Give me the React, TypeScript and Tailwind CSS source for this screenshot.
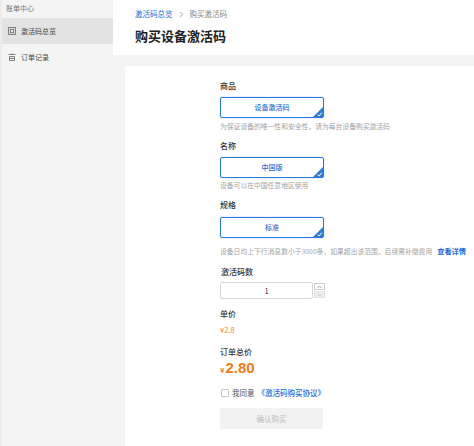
import { ChevronRight } from "lucide-react";

const font = { fontFamily: '"Noto Sans CJK SC", "Noto Sans", sans-serif' };

function OptionBox({ label }: { label: string }) {
  return (
    <div className="relative flex h-[21px] w-[104px] items-center justify-center rounded-[2px] border border-[#2f7ad8] bg-white text-[7px] font-medium text-[#1f6bd0] shadow-[0_0_2px_rgba(47,122,216,0.35)]">
      {label}
      <svg className="absolute bottom-0 right-0" width="10" height="10" viewBox="0 0 10 10">
        <path d="M10 0 L10 10 L0 10 Z" fill="#2f7ad8" />
        <path d="M4.6 7.6 L6.2 9 L8.8 5.6" stroke="white" strokeWidth="1" fill="none" />
      </svg>
    </div>
  );
}

function Label({ children }: { children: React.ReactNode }) {
  return <div className="text-[8px] font-medium leading-[10px] text-[#333]">{children}</div>;
}

function Hint({ children }: { children: React.ReactNode }) {
  return <div className="text-[6.8px] leading-[10px] text-[#a3a3a3]">{children}</div>;
}

export default function App() {
  return (
    <div className="flex h-[446px] w-[474px] overflow-hidden bg-white" style={font}>
      {/* sidebar */}
      <aside className="flex w-[113px] shrink-0 flex-col bg-[#f4f4f4] border-l-2 border-[#ececec]">
        <div className="px-[4px] pt-[3px] text-[7px] leading-[10px] text-[#777]">账单中心</div>
        <div className="mt-[5px] flex h-[26px] items-center gap-[5px] bg-[#e3e3e3] px-[6px] text-[7px] text-[#444]">
          <svg width="8" height="8" viewBox="0 0 8 8" fill="none" stroke="#666" strokeWidth="0.8">
            <rect x="0.5" y="0.5" width="7" height="7" />
            <rect x="2.3" y="2.3" width="3.4" height="3.4" />
          </svg>
          激活码总览
        </div>
        <div className="flex h-[26px] items-center gap-[5px] px-[6px] text-[7px] text-[#444]">
          <svg width="8" height="8" viewBox="0 0 8 8" fill="none" stroke="#666" strokeWidth="0.8">
            <path d="M0.5 1.5 H7.5 M4 0.3 V1.5 M1.5 3.5 H6.5 V7.5 H1.5 Z M1.5 5.5 H6.5" />
          </svg>
          订单记录
        </div>
      </aside>

      {/* main */}
      <div className="flex flex-1 flex-col">
        <header className="h-[55px] shrink-0 bg-white pl-[22px]">
          <div className="flex items-center gap-[4px] pt-[9px] text-[7.5px] leading-[10px]">
            <span className="text-[#1f6bd0]">激活码总览</span>
            <ChevronRight size={9} className="text-[#666]" strokeWidth={1.5} />
            <span className="text-[#888]">购买激活码</span>
          </div>
          <div className="mt-[9px] text-[13px] font-bold leading-[16px] text-[#222]">购买设备激活码</div>
        </header>

        <div className="flex flex-1 bg-[#f4f4f4] pl-[12px] pt-[11px]">
          <div className="flex flex-1 flex-col bg-white pl-[95px] pt-[15px]">
            <Label>商品</Label>
            <div className="mt-[6px]">
              <OptionBox label="设备激活码" />
            </div>
            <div className="mt-[3px]">
              <Hint>为保证设备的唯一性和安全性，请为每台设备购买激活码</Hint>
            </div>

            <div className="mt-[10px]">
              <Label>名称</Label>
            </div>
            <div className="mt-[6px]">
              <OptionBox label="中国版" />
            </div>
            <div className="mt-[2px]">
              <Hint>设备可以在中国任意地区使用</Hint>
            </div>

            <div className="mt-[10px]">
              <Label>规格</Label>
            </div>
            <div className="mt-[7px]">
              <OptionBox label="标准" />
            </div>
            <div className="mt-[8px] flex items-center gap-[5px] whitespace-nowrap">
              <Hint>设备日均上下行消息数小于3000条，如果超出该范围，后续需补缴费用</Hint>
              <span className="text-[7.2px] font-bold leading-[10px] text-[#1f6bd0]">查看详情</span>
            </div>

            <div className="mt-[11px] pl-[1px]">
              <Label>激活码数</Label>
            </div>
            <div className="mt-[5px] flex items-start gap-[1px]">
              <div className="flex h-[17px] w-[93px] items-center justify-center rounded-[2px] border border-[#d6d6d6] text-[7.5px] text-[#333]">
                1
              </div>
              <div className="flex flex-col gap-[1px] pt-[1px]">
                <div className="flex h-[7px] w-[11px] items-center justify-center border border-[#d0d0d0] bg-white">
                  <svg width="5" height="4" viewBox="0 0 5 4">
                    <path d="M0.5 3 L2.5 1 L4.5 3" stroke="#888" strokeWidth="0.8" fill="none" />
                  </svg>
                </div>
                <div className="flex h-[7px] w-[11px] items-center justify-center border border-[#e4e4e4] bg-[#ededed]">
                  <svg width="5" height="4" viewBox="0 0 5 4">
                    <path d="M0.5 1 L2.5 3 L4.5 1" stroke="#c8c8c8" strokeWidth="0.8" fill="none" />
                  </svg>
                </div>
              </div>
            </div>

            <div className="mt-[10px]">
              <Label>单价</Label>
            </div>
            <div className="mt-[6px] text-[7.5px] leading-[10px] text-[#f0882e]">¥2.8</div>

            <div className="mt-[12px]">
              <Label>订单总价</Label>
            </div>
            <div className="mt-[1px] flex h-[20px] items-baseline gap-[1px] text-[#f07d1a]" style={{ fontFamily: '"Liberation Sans", Arial, sans-serif' }}>
              <span className="text-[8px] font-bold">¥</span>
              <span className="text-[15px] font-bold leading-[20px]">2.80</span>
            </div>

            <div className="mt-[10px] flex h-[10px] items-center gap-[3px] pl-[1px]">
              <div className="h-[8px] w-[8px] rounded-[1px] border border-[#c8c8c8] bg-white" />
              <span className="text-[7.5px] text-[#555]">我同意</span>
              <span className="text-[7.5px] font-medium text-[#1f6bd0]">《激活码购买协议》</span>
            </div>

            <button className="mt-[10px] flex h-[21px] w-[103px] items-center justify-center rounded-[2px] bg-[#f2f2f2] text-[7.5px] text-[#bdbdbd]">
              确认购买
            </button>
          </div>
        </div>
      </div>
    </div>
  );
}
